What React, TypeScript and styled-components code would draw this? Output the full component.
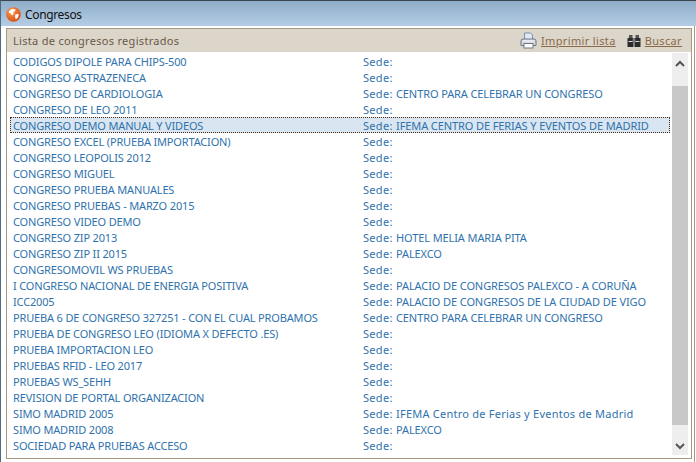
import React from "react";
import styled, { createGlobalStyle } from "styled-components";

const GlobalStyle = createGlobalStyle`
  html, body { margin: 0; padding: 0; background: #fff; }
  body { font-family: "Noto Sans", "Liberation Sans", sans-serif; font-size: 11px; }
`;

const Window = styled.div`
  width: 696px;
  height: 462px;
  overflow: hidden;
  display: flex;
  flex-direction: column;
  box-sizing: border-box;
  border-top: 1px solid #3c4650;
  border-left: 1px solid #4d6a80;
  background: #fff;
`;
const TitleBar = styled.div`
  height: 25px;
  flex: none;
  display: flex;
  align-items: center;
  gap: 4px;
  padding: 2px 0 0 5px;
  box-sizing: border-box;
  background: linear-gradient(to bottom, #8fadc9, #b4cde4);
`;
const WindowTitle = styled.span`
  font-size: 12px;
  letter-spacing: -0.35px;
  color: #111;
`;
const Frame = styled.div`
  flex: 1;
  display: flex;
  min-height: 0;
  padding: 2px 2px 0 5px;
  margin-right: 1px;
  border-right: 1px solid #a79a85;
`;
const Panel = styled.div`
  flex: 1;
  height: 431px;
  box-sizing: border-box;
  border: 1px solid #a79a85;
  display: flex;
  flex-direction: column;
`;
const PanelHeader = styled.div`
  height: 23px;
  flex: none;
  display: flex;
  align-items: center;
  padding: 0 9px 0 6px;
  background: #dcd5c9;
`;
const PanelTitle = styled.span`
  flex: 1;
  letter-spacing: 0.3px;
  color: #6a5a48;
`;
const HeaderAction = styled.a<{ $gap: number }>`
  display: flex;
  align-items: center;
  gap: 4px;
  margin-left: ${(p) => p.$gap}px;
  color: #8a6a4a;
  letter-spacing: 0.35px;
  text-decoration: underline;
`;
const ListArea = styled.div`
  flex: 1;
  display: flex;
  padding: 1px 3px 3px 3px;
  min-height: 0;
`;
const Rows = styled.div`
  flex: 1;
  padding-right: 2px;
`;
const Row = styled.div<{ $selected?: boolean }>`
  height: 16px;
  box-sizing: border-box;
  display: grid;
  grid-template-columns: 350px 33px 1fr;
  align-items: center;
  padding-left: 3px;
  color: #2f72ad;
  white-space: nowrap;
  background: ${(p) => (p.$selected ? "#d9e5f0" : "transparent")};
  outline: ${(p) => (p.$selected ? "1px dotted #4a2a10" : "none")};
  outline-offset: -1px;
`;
const Name = styled.span`
  letter-spacing: -0.16px;
`;
const SedeLabel = styled.span`
  letter-spacing: 0.3px;
`;
const Venue = styled.span<{ $mixed: boolean }>`
  letter-spacing: ${(p) => (p.$mixed ? "0.24px" : "-0.1px")};
`;
const Scrollbar = styled.div`
  width: 16px;
  flex: none;
  display: flex;
  flex-direction: column;
  background: #eeeeee;
`;
const ScrollButton = styled.div<{ $up?: boolean }>`
  height: ${(p) => (p.$up ? 33 : 30)}px;
  flex: none;
  box-sizing: border-box;
  display: flex;
  justify-content: center;
  align-items: ${(p) => (p.$up ? "flex-start" : "flex-end")};
  padding: ${(p) => (p.$up ? "7px 0 0" : "0 0 5px")};
`;
const ScrollThumb = styled.div`
  flex: 1;
  background: #c8c8c8;
`;

const rows: [string, string, boolean?][] = [
  ["CODIGOS DIPOLE PARA CHIPS-500", ""],
  ["CONGRESO ASTRAZENECA", ""],
  ["CONGRESO DE CARDIOLOGIA", "CENTRO PARA CELEBRAR UN CONGRESO"],
  ["CONGRESO DE LEO 2011", ""],
  ["CONGRESO DEMO MANUAL Y VIDEOS", "IFEMA CENTRO DE FERIAS Y EVENTOS DE MADRID", true],
  ["CONGRESO EXCEL (PRUEBA IMPORTACION)", ""],
  ["CONGRESO LEOPOLIS 2012", ""],
  ["CONGRESO MIGUEL", ""],
  ["CONGRESO PRUEBA MANUALES", ""],
  ["CONGRESO PRUEBAS - MARZO 2015", ""],
  ["CONGRESO VIDEO DEMO", ""],
  ["CONGRESO ZIP 2013", "HOTEL MELIA MARIA PITA"],
  ["CONGRESO ZIP II 2015", "PALEXCO"],
  ["CONGRESOMOVIL WS PRUEBAS", ""],
  ["I CONGRESO NACIONAL DE ENERGIA POSITIVA", "PALACIO DE CONGRESOS PALEXCO - A CORUÑA"],
  ["ICC2005", "PALACIO DE CONGRESOS DE LA CIUDAD DE VIGO"],
  ["PRUEBA 6 DE CONGRESO 327251 - CON EL CUAL PROBAMOS", "CENTRO PARA CELEBRAR UN CONGRESO"],
  ["PRUEBA DE CONGRESO LEO (IDIOMA X DEFECTO .ES)", ""],
  ["PRUEBA IMPORTACION LEO", ""],
  ["PRUEBAS RFID - LEO 2017", ""],
  ["PRUEBAS WS_SEHH", ""],
  ["REVISION DE PORTAL ORGANIZACION", ""],
  ["SIMO MADRID 2005", "IFEMA Centro de Ferias y Eventos de Madrid"],
  ["SIMO MADRID 2008", "PALEXCO"],
  ["SOCIEDAD PARA PRUEBAS ACCESO", ""],
];

const GlobeIcon = () => (
  <svg width="15" height="15" viewBox="0 0 15 15">
    <defs>
      <radialGradient id="globe" cx="0.35" cy="0.3" r="0.8">
        <stop offset="0" stopColor="#f59a4a" />
        <stop offset="1" stopColor="#d9480f" />
      </radialGradient>
    </defs>
    <circle cx="7.5" cy="7.5" r="7.3" fill="url(#globe)" />
    <path d="M3 4 L6 1.8 L9.5 2.6 L9 4.4 L7 4.8 L7.8 7 L5.8 8.6 L4.8 6.6 L2.8 5.8 Z M9.5 7.2 L12.8 7 L12 10.4 L9.8 12.4 L9 9.6 Z" fill="#fff" />
  </svg>
);

const PrinterIcon = () => (
  <svg width="17" height="17" viewBox="0 0 17 17">
    <path d="M4.5 1 H10.5 L12.5 3 V8 H4.5 Z" fill="#dfe9f5" stroke="#7f90a8" />
    <path d="M1 9 Q1 7 3 7 H14 Q16 7 16 9 V13.5 H1 Z" fill="#d6dae0" stroke="#6f7785" />
    <rect x="3" y="8.5" width="11" height="1" fill="#f6f7f9" />
    <rect x="4" y="11.5" width="9" height="4.5" fill="#fff" stroke="#6f7785" />
  </svg>
);

const BinocularsIcon = () => (
  <svg width="14" height="12" viewBox="0 0 14 12">
    <rect x="2" y="0" width="3.5" height="3" fill="#555" />
    <rect x="8.5" y="0" width="3.5" height="3" fill="#555" />
    <rect x="0.5" y="3" width="6" height="9" fill="#2b2b2b" />
    <rect x="7.5" y="3" width="6" height="9" fill="#2b2b2b" />
    <rect x="5.5" y="4" width="3" height="3" fill="#777" />
    <rect x="1.5" y="6" width="4" height="1" fill="#d8d8d8" />
    <rect x="8.5" y="6" width="4" height="1" fill="#d8d8d8" />
  </svg>
);

const Chevron = ({ up }: { up?: boolean }) => (
  <svg width="10" height="7" viewBox="0 0 10 7">
    <path d={up ? "M1 6 L5 2 L9 6" : "M1 1 L5 5 L9 1"} fill="none" stroke="#555" strokeWidth="2" />
  </svg>
);

export default function App() {
  return (
    <Window>
      <GlobalStyle />
      <TitleBar>
        <GlobeIcon />
        <WindowTitle>Congresos</WindowTitle>
      </TitleBar>
      <Frame>
        <Panel>
          <PanelHeader>
            <PanelTitle>Lista de congresos registrados</PanelTitle>
            <HeaderAction $gap={0}>
              <PrinterIcon />
              Imprimir lista
            </HeaderAction>
            <HeaderAction $gap={11}>
              <BinocularsIcon />
              Buscar
            </HeaderAction>
          </PanelHeader>
          <ListArea>
            <Rows>
              {rows.map(([name, venue, selected]) => (
                <Row key={name} $selected={selected}>
                  <Name>{name}</Name>
                  <SedeLabel>Sede:</SedeLabel>
                  <Venue $mixed={venue !== venue.toUpperCase()}>{venue}</Venue>
                </Row>
              ))}
            </Rows>
            <Scrollbar>
              <ScrollButton $up>
                <Chevron up />
              </ScrollButton>
              <ScrollThumb />
              <ScrollButton>
                <Chevron />
              </ScrollButton>
            </Scrollbar>
          </ListArea>
        </Panel>
      </Frame>
    </Window>
  );
}
